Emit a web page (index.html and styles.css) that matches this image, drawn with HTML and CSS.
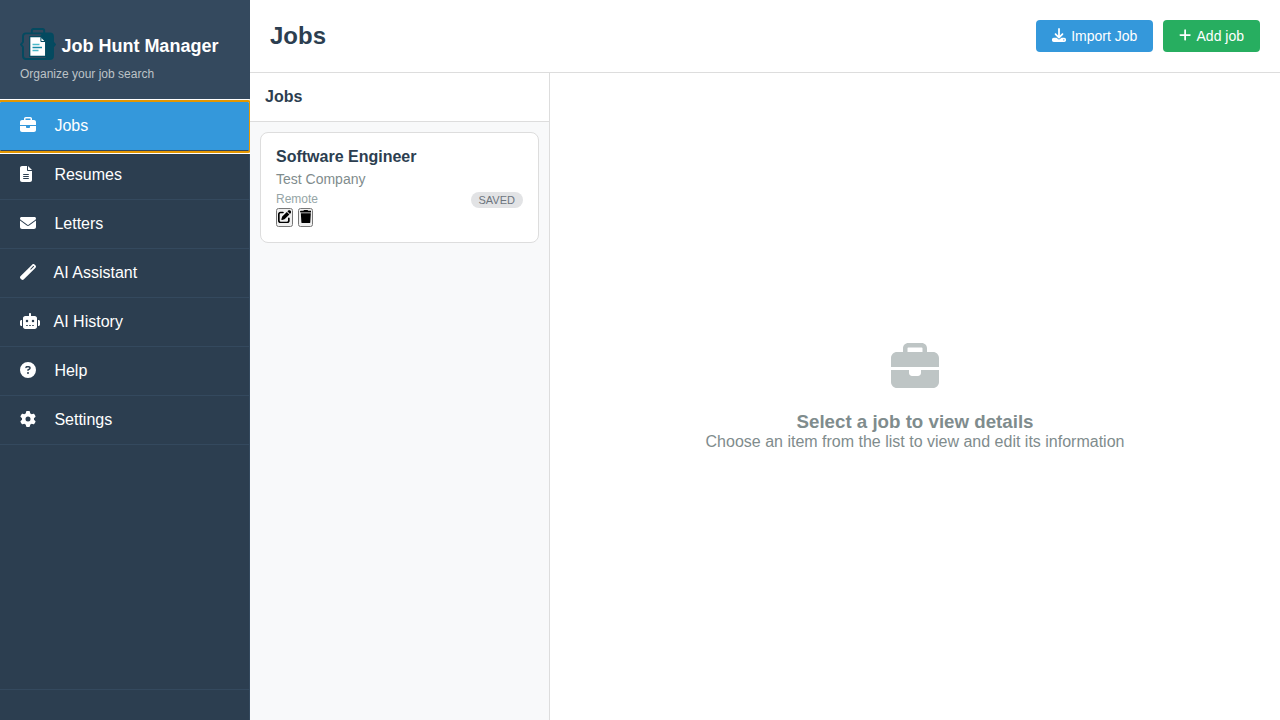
FILE: index.html
```html
<!DOCTYPE html>
<html lang="en">
<head>
<meta charset="utf-8">
<title>Job Hunt Manager</title>
<link rel="stylesheet" href="styles.css">
</head>
<body>
<svg class="defs" aria-hidden="true">
  <symbol id="briefcase" viewBox="0 0 512 512"><path d="M184 48H328c4.400 0 8 3.600 8 8V96H176V56c0-4.400 3.600-8 8-8zm-56 8V96H64C28.700 96 0 124.700 0 160v96H192 320 512V160c0-35.300-28.700-64-64-64H384V56c0-30.900-25.100-56-56-56H184c-30.900 0-56 25.100-56 56zM512 288H320v32c0 17.700-14.300 32-32 32H224c-17.700 0-32-14.300-32-32V288H0V416c0 35.300 28.700 64 64 64H448c35.300 0 64-28.700 64-64V288z"/></symbol>
</svg>
<div class="app">
  <aside class="sidebar">
    <div class="brand">
      <h1 class="brand-title">
        <svg class="logo" viewBox="0 0 36 36">
          <path d="M11.800 7V4.800Q11.800 3 13.600 3H22.400Q24.200 3 24.200 4.800V7" fill="none" stroke="#044a60" stroke-width="1.900"/>
          <path d="M6 7.400H30Q33 7.400 33 10.400V16L35 18.500L33 21V30Q33 33 30 33H6Q3 33 3 30V21L1 18.500L3 16V10.400Q3 7.400 6 7.400Z" fill="none" stroke="#044a60" stroke-width="1.900"/>
          <path d="M22 7.400H30Q33 7.400 33 10.400V16L35 18.500L33 21V30Q33 33 30 33H24.500L26 31V16L20 10.500Z" fill="#044a60"/>
          <path d="M9.700 10.700H21L25.700 15.500V30.300H9.700Z" fill="#fff" stroke="#044a60" stroke-width="1.300"/>
          <path d="M20.900 11.300V15.500H25.500Z" fill="#fff" stroke="#044a60" stroke-width="1"/>
          <path d="M12.500 18.500H19.500M12.500 24.500H18.500" stroke="#4bb9c9" stroke-width="1.500"/>
          <path d="M12.500 21.500H22" stroke="#168ba7" stroke-width="1.500"/>
        </svg>
        <span>Job Hunt Manager</span>
      </h1>
      <p class="tagline">Organize your job search</p>
    </div>
    <nav class="nav">
      <a class="nav-item active"><svg class="ico"><use href="#briefcase"/></svg><span>Jobs</span></a>
      <a class="nav-item"><svg class="ico ico-narrow" viewBox="0 0 384 512"><path d="M64 0C28.700 0 0 28.700 0 64V448c0 35.300 28.700 64 64 64H320c35.300 0 64-28.700 64-64V160H256c-17.700 0-32-14.300-32-32V0H64zM256 0V128H384L256 0zM112 256H272c8.800 0 16 7.200 16 16s-7.200 16-16 16H112c-8.800 0-16-7.200-16-16s7.200-16 16-16zm0 64H272c8.800 0 16 7.200 16 16s-7.200 16-16 16H112c-8.800 0-16-7.200-16-16s7.200-16 16-16zm0 64H272c8.800 0 16 7.200 16 16s-7.200 16-16 16H112c-8.800 0-16-7.200-16-16s7.200-16 16-16z"/></svg><span>Resumes</span></a>
      <a class="nav-item"><svg class="ico" viewBox="0 0 512 512"><path d="M48 64C21.500 64 0 85.500 0 112c0 15.100 7.100 29.300 19.200 38.400L236.800 313.600c11.400 8.500 27 8.500 38.400 0L492.800 150.400c12.100-9.100 19.200-23.300 19.200-38.400c0-26.500-21.500-48-48-48H48zM0 176V384c0 35.300 28.700 64 64 64H448c35.300 0 64-28.700 64-64V176L294.400 339.200c-22.800 17.100-54 17.100-76.800 0L0 176z"/></svg><span>Letters</span></a>
      <a class="nav-item nav-ai"><svg class="ico" viewBox="0 0 512 512"><path d="M14.100 463.300c-18.700-18.700-18.700-49.100 0-67.900L395.400 14.100c18.700-18.700 49.100-18.700 67.900 0l34.600 34.600c18.700 18.700 18.700 49.100 0 67.900L116.500 497.900c-18.700 18.700-49.100 18.700-67.900 0L14.100 463.300zM347.600 187.600l105-105L429.400 59.300l-105 105 23.300 23.300z"/></svg><span>AI Assistant</span></a>
      <a class="nav-item nav-ai"><svg class="ico ico-wide" viewBox="0 0 640 512"><path d="M320 0c17.700 0 32 14.300 32 32V96H472c39.800 0 72 32.200 72 72V440c0 39.800-32.200 72-72 72H168c-39.800 0-72-32.200-72-72V168c0-39.800 32.200-72 72-72H288V32c0-17.700 14.300-32 32-32zM208 384c-8.800 0-16 7.200-16 16s7.200 16 16 16h32c8.800 0 16-7.200 16-16s-7.200-16-16-16H208zm96 0c-8.800 0-16 7.200-16 16s7.200 16 16 16h32c8.800 0 16-7.200 16-16s-7.200-16-16-16H304zm96 0c-8.800 0-16 7.200-16 16s7.200 16 16 16h32c8.800 0 16-7.200 16-16s-7.200-16-16-16H400zM264 256a40 40 0 1 0-80 0 40 40 0 1 0 80 0zm152 40a40 40 0 1 0 0-80 40 40 0 1 0 0 80zM48 224H64V416H48c-26.500 0-48-21.500-48-48V272c0-26.500 21.500-48 48-48zm544 0c26.500 0 48 21.500 48 48v96c0 26.500-21.500 48-48 48H576V224h16z"/></svg><span>AI History</span></a>
      <a class="nav-item"><svg class="ico" viewBox="0 0 512 512"><path d="M256 512A256 256 0 1 0 256 0a256 256 0 1 0 0 512zM169.800 165.300c7.900-22.300 29.100-37.300 52.800-37.300h58.300c34.900 0 63.100 28.300 63.100 63.100c0 22.600-12.100 43.500-31.700 54.800L280 264.400c-.2 13-10.900 23.600-24 23.600c-13.300 0-24-10.700-24-24V250.500c0-8.600 4.600-16.500 12.100-20.800l44.300-25.400c4.700-2.700 7.600-7.700 7.600-13.100c0-8.400-6.800-15.100-15.100-15.100H222.600c-3.400 0-6.400 2.100-7.500 5.300l-.4 1.200c-4.400 12.500-18.200 19-30.600 14.600s-19-18.200-14.600-30.600l.4-1.200zM224 352a32 32 0 1 1 64 0 32 32 0 1 1-64 0z"/></svg><span>Help</span></a>
      <a class="nav-item"><svg class="ico" viewBox="0 0 512 512"><path d="M495.900 166.600c3.200 8.700 .5 18.400-6.400 24.600l-43.300 39.400c1.100 8.300 1.700 16.800 1.700 25.400s-.6 17.100-1.700 25.400l43.300 39.400c6.900 6.200 9.600 15.900 6.400 24.600c-4.400 11.900-9.700 23.300-15.800 34.300l-4.700 8.100c-6.600 11-14 21.400-22.100 31.200c-5.900 7.200-15.700 9.600-24.500 6.800l-55.700-17.700c-13.400 10.300-28.200 18.900-44 25.400l-12.500 57.100c-2 9.100-9 16.300-18.200 17.800c-13.800 2.300-28 3.500-42.500 3.500s-28.700-1.200-42.500-3.500c-9.200-1.500-16.200-8.700-18.200-17.800l-12.500-57.100c-15.800-6.500-30.600-15.100-44-25.400L83.100 425.900c-8.800 2.800-18.600 .3-24.500-6.800c-8.100-9.800-15.500-20.200-22.100-31.200l-4.700-8.100c-6.100-11-11.400-22.400-15.800-34.300c-3.200-8.700-.5-18.400 6.400-24.600l43.300-39.400C64.600 273.100 64 264.600 64 256s.6-17.100 1.700-25.400L22.400 191.200c-6.900-6.200-9.600-15.900-6.400-24.600c4.400-11.900 9.700-23.300 15.800-34.300l4.700-8.100c6.600-11 14-21.400 22.100-31.200c5.900-7.200 15.700-9.600 24.500-6.800l55.700 17.700c13.400-10.300 28.200-18.900 44-25.400l12.500-57.100c2-9.100 9-16.300 18.200-17.800C227.300 1.200 241.500 0 256 0s28.700 1.200 42.500 3.500c9.200 1.500 16.200 8.700 18.200 17.800l12.500 57.100c15.800 6.500 30.600 15.100 44 25.400l55.700-17.700c8.800-2.800 18.600-.3 24.500 6.800c8.100 9.800 15.500 20.200 22.100 31.200l4.700 8.100c6.100 11 11.400 22.400 15.800 34.300zM256 336a80 80 0 1 0 0-160 80 80 0 1 0 0 160z"/></svg><span>Settings</span></a>
    </nav>
    <div class="sidebar-footer"></div>
  </aside>
  <main class="main">
    <header class="topbar">
      <h2 class="page-title">Jobs</h2>
      <div class="actions">
        <button class="btn btn-primary"><svg class="btn-ico" viewBox="0 0 512 512"><path d="M288 32c0-17.700-14.300-32-32-32s-32 14.300-32 32V274.700l-73.400-73.400c-12.500-12.500-32.800-12.500-45.300 0s-12.500 32.800 0 45.300l128 128c12.500 12.500 32.800 12.500 45.300 0l128-128c12.500-12.500 12.500-32.800 0-45.300s-32.800-12.500-45.300 0L288 274.700V32zM64 352c-35.300 0-64 28.700-64 64v32c0 35.300 28.700 64 64 64H448c35.300 0 64-28.700 64-64V416c0-35.300-28.700-64-64-64H346.500l-45.300 45.300c-25 25-65.500 25-90.500 0L165.500 352H64zm368 56a24 24 0 1 1 0 48 24 24 0 1 1 0-48z"/></svg><span>Import Job</span></button>
        <button class="btn btn-success"><svg class="btn-ico btn-ico-plus" viewBox="0 0 448 512"><path d="M256 80c0-17.700-14.300-32-32-32s-32 14.300-32 32V224H48c-17.700 0-32 14.300-32 32s14.300 32 32 32H192V432c0 17.700 14.300 32 32 32s32-14.300 32-32V288H400c17.700 0 32-14.300 32-32s-14.300-32-32-32H256V80z"/></svg><span>Add job</span></button>
      </div>
    </header>
    <div class="content">
      <section class="list-panel">
        <h3 class="list-title">Jobs</h3>
        <div class="list">
          <article class="card">
            <div class="card-title">Software Engineer</div>
            <div class="card-company">Test Company</div>
            <div class="card-meta"><span>Remote</span><span class="badge">SAVED</span></div>
            <div class="card-actions">
              <button class="icon-btn" aria-label="Edit"><svg class="act-ico" viewBox="0 0 512 512"><path d="M471.600 21.700c-21.900-21.900-57.300-21.900-79.200 0L362.300 51.700l97.900 97.900 30.100-30.100c21.900-21.900 21.900-57.300 0-79.200L471.600 21.700zm-299.200 220c-6.100 6.100-10.800 13.600-13.500 21.900l-29.600 88.800c-2.900 8.600-.6 18.100 5.800 24.600s15.900 8.700 24.600 5.800l88.800-29.600c8.200-2.700 15.700-7.400 21.900-13.500L437.700 172.300 339.700 74.300 172.400 241.700zM96 64C43 64 0 107 0 160V416c0 53 43 96 96 96H352c53 0 96-43 96-96V320c0-17.700-14.300-32-32-32s-32 14.300-32 32v96c0 17.700-14.300 32-32 32H96c-17.700 0-32-14.300-32-32V160c0-17.700 14.300-32 32-32h96c17.700 0 32-14.300 32-32s-14.300-32-32-32H96z"/></svg></button>
              <button class="icon-btn" aria-label="Delete"><svg class="act-ico act-ico-trash" viewBox="0 0 448 512"><path d="M135.200 17.700L128 32H32C14.300 32 0 46.300 0 64S14.300 96 32 96H416c17.700 0 32-14.300 32-32s-14.300-32-32-32H320l-7.200-14.300C307.400 6.800 296.300 0 284.200 0H163.800c-12.100 0-23.200 6.800-28.600 17.700zM416 128H32L53.200 467c1.600 25.300 22.600 45 47.900 45H346.900c25.300 0 46.300-19.700 47.900-45L416 128z"/></svg></button>
            </div>
          </article>
        </div>
      </section>
      <section class="empty">
        <svg class="empty-ico"><use href="#briefcase"/></svg>
        <h3 class="empty-title">Select a job to view details</h3>
        <p class="empty-text">Choose an item from the list to view and edit its information</p>
      </section>
    </div>
  </main>
</div>
</body>
</html>
```

FILE: styles.css
```css
* { box-sizing: border-box; margin: 0; padding: 0; }
body { font-family: "Liberation Sans", Arial, sans-serif; color: #2c3e50; background: #fff; overflow: hidden; }
svg { display: block; fill: currentColor; flex: none; }
.defs { display: none; }
.app { display: flex; height: 100vh; }

.sidebar { width: 250px; display: flex; flex-direction: column; background: #2c3e50; color: #fff; border-right: 1px solid #34495e; }
.brand { height: 102px; padding: 26px 20px 0; background: #34495e; }
.brand-title { display: flex; align-items: center; gap: 5.4px; height: 36px; font-size: 18px; line-height: 21px; }
.brand-title span { padding-top: 4px; }
.logo { width: 36px; height: 36px; }
.tagline { margin-top: 5px; font-size: 12px; line-height: 14px; color: #bdc3c7; }
.nav { flex: 1; }
.nav-item { display: flex; align-items: center; height: 49px; padding: 0 20px; border-bottom: 1px solid #34495e; font-size: 16px; line-height: 18px; color: #fff; }
.nav-item span { margin-left: 14.4px; }
.nav-ai span { margin-left: 13.55px; }
.ico { width: 16px; height: 16px; margin-right: 4px; margin-bottom: 2px; color: #fff; }
.ico-narrow { width: 12px; margin-right: 8px; }
.ico-wide { width: 20px; margin-right: 0; }
.nav-item.active { background: #3498db; position: relative; outline: 2px solid #e59700; box-shadow: 0 0 0 3px #fff; border-radius: 1px; }
.sidebar-footer { height: 31px; border-top: 1px solid #34495e; }

.main { flex: 1; display: flex; flex-direction: column; position: relative; background: #fff; }
.topbar { display: flex; justify-content: space-between; align-items: center; height: 73px; padding: 0 20px; border-bottom: 1px solid #ddd; }
.page-title { font-size: 24px; line-height: 28px; }
.actions { display: flex; gap: 10px; }
.btn { display: flex; align-items: center; gap: 5px; height: 32px; padding: 0 16px; border: 0; border-radius: 4px; color: #fff; font: 14px/16px "Liberation Sans", Arial, sans-serif; }
.btn-primary { background: #3498db; }
.btn-success { background: #27ae60; }
.btn-ico { width: 14px; height: 14px; margin-bottom: 1.5px; }
.btn-ico-plus { width: 12.25px; }

.content { flex: 1; display: flex; }
.list-panel { width: 300px; background: #f8f9fa; border-right: 1px solid #ddd; }
.list-title { height: 49px; padding: 15px; border-bottom: 1px solid #ddd; background: #fff; font-size: 16px; line-height: 18px; }
.list { padding: 10px; }
.card { height: 111px; padding: 15px; border: 1px solid #ddd; border-radius: 8px; background: #fff; }
.card-title { font-size: 16px; line-height: 18px; font-weight: bold; margin-bottom: 5px; }
.card-company { font-size: 14px; line-height: 16px; color: #7f8c8d; margin-bottom: 5px; }
.card-meta { display: flex; justify-content: space-between; height: 16px; font-size: 12px; line-height: 14px; color: #95a5a6; }
.badge { height: 16px; padding: 0 8px; border-radius: 10px; background: #e2e3e5; color: #6c757d; font-size: 11px; line-height: 16px; }
.card-actions { display: flex; gap: 4.4px; }
.icon-btn { display: flex; align-items: center; height: 19px; color: #000; }
.act-ico { width: 13.33px; height: 13.33px; margin-bottom: 1.5px; }
.act-ico-trash { width: 11.67px; }

.empty { flex: 1; display: flex; flex-direction: column; align-items: center; justify-content: center; color: #7f8c8d; }
.empty-ico { width: 48px; height: 48px; margin-bottom: 20px; opacity: .5; }
.empty-title { font-size: 18.72px; line-height: 21px; }
.empty-text { font-size: 16px; line-height: 19px; }
```
